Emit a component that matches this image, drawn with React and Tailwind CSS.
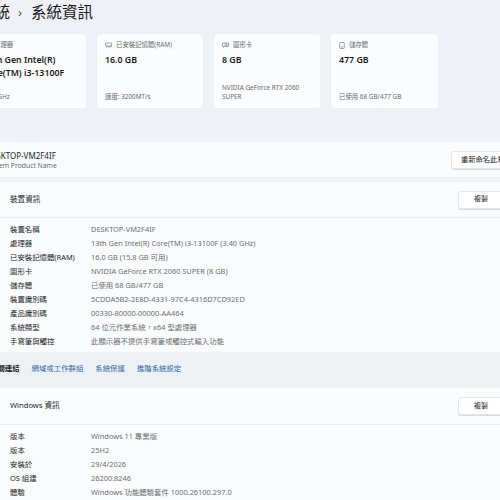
import React from "react";

const FONT = "font-['Noto_Sans','Noto_Sans_CJK_TC',sans-serif]";

function ChipIcon() {
  return (
    <svg width="7" height="6" viewBox="0 0 14 12" fill="none" stroke="#7a7a7a" strokeWidth="1.4">
      <rect x="1" y="2" width="12" height="6" rx="0.5" />
      <path d="M3 8v3M6 8v3M9 8v3M12 8v3" />
    </svg>
  );
}

function GpuIcon() {
  return (
    <svg width="7" height="6" viewBox="0 0 14 12" fill="none" stroke="#7a7a7a" strokeWidth="1.4">
      <rect x="1" y="2" width="12" height="7" rx="0.5" />
      <circle cx="8" cy="5.5" r="2" />
      <path d="M3 9v2" />
    </svg>
  );
}

function DriveIcon() {
  return (
    <svg width="6" height="7" viewBox="0 0 12 14" fill="none" stroke="#7a7a7a" strokeWidth="1.4">
      <rect x="1.5" y="1" width="9" height="12" rx="1" />
      <path d="M4 10h4" />
    </svg>
  );
}

function CpuIcon() {
  return (
    <svg width="7" height="7" viewBox="0 0 14 14" fill="none" stroke="#7a7a7a" strokeWidth="1.4">
      <rect x="3" y="3" width="8" height="8" />
      <path d="M5 1v2M9 1v2M5 11v2M9 11v2M1 5h2M1 9h2M11 5h2M11 9h2" />
    </svg>
  );
}

function Chevron() {
  return (
    <svg width="8" height="8" viewBox="0 0 16 16" fill="none" stroke="#555" strokeWidth="1.4">
      <path d="M4 10l4-4 4 4" />
    </svg>
  );
}

const cards = [
  { icon: <CpuIcon />, label: "處理器", value: ["13th Gen Intel(R)", "Core(TM) i3-13100F"], sub: ["3.40 GHz"], w: "w-[113px]" },
  { icon: <ChipIcon />, label: "已安裝記憶體(RAM)", value: ["16.0 GB"], sub: ["速度: 3200MT/s"], w: "w-[108px]" },
  { icon: <GpuIcon />, label: "圖形卡", value: ["8 GB"], sub: ["NVIDIA GeForce RTX 2060", "SUPER"], w: "w-[108px]" },
  { icon: <DriveIcon />, label: "儲存體", value: ["477 GB"], sub: ["已使用 68 GB/477 GB"], w: "w-[109px]" },
];

const deviceRows = [
  ["裝置名稱", "DESKTOP-VM2F4IF"],
  ["處理器", "13th Gen Intel(R) Core(TM) i3-13100F (3.40 GHz)"],
  ["已安裝記憶體(RAM)", "16.0 GB (15.8 GB 可用)"],
  ["圖形卡", "NVIDIA GeForce RTX 2060 SUPER (8 GB)"],
  ["儲存體", "已使用 68 GB/477 GB"],
  ["裝置識別碼", "5CDDA5B2-2E8D-4331-97C4-4316D7CD92ED"],
  ["產品識別碼", "00330-80000-00000-AA464"],
  ["系統類型", "64 位元作業系統，x64 型處理器"],
  ["手寫筆與觸控", "此顯示器不提供手寫筆或觸控式輸入功能"],
];

const windowsRows = [
  ["版本", "Windows 11 專業版"],
  ["版本", "25H2"],
  ["安裝於", "29/4/2026"],
  ["OS 組建", "26200.8246"],
  ["體驗", "Windows 功能體驗套件 1000.26100.297.0"],
];

function InfoRow({ label, value }) {
  return (
    <div className="flex h-[14px] items-center">
      <div className="w-[81px] shrink-0 text-[7.4px] text-[#262626] whitespace-nowrap">{label}</div>
      <div className="text-[7.4px] text-[#6e6e6e] whitespace-nowrap">{value}</div>
    </div>
  );
}

function SectionHeader({ title, icon, height }) {
  return (
    <div className={`flex items-center ${height} border-b border-[#e9ecf0] pl-[9px] pr-[8px]`}>
      <div className="w-[22px] shrink-0 flex items-center">{icon}</div>
      <div className="text-[7.6px] text-[#1f1f1f] whitespace-nowrap">{title}</div>
      <div className="ml-auto flex items-center gap-[10px]">
        <button className="w-[46px] h-[18px] rounded-[3px] bg-white border border-[#e3e5e9] shadow-[0_1px_0_#d9dbe0] text-[7px] text-[#222]">
          複製
        </button>
        <div className="w-[8px]">
          <Chevron />
        </div>
      </div>
    </div>
  );
}

export default function App() {
  return (
    <div className={`w-[500px] h-[500px] overflow-hidden bg-[#eff1f7] ${FONT}`}>
      <div className="ml-[-21px] w-[551px]">
        {/* Breadcrumb title */}
        <div className="flex items-center h-[20px] mt-[3px] gap-[8px] text-[15.5px] text-[#1a1a1a] whitespace-nowrap">
          <span>系統</span>
          <span className="text-[13px] text-[#555]">›</span>
          <span className="ml-[1px]">系統資訊</span>
        </div>

        {/* Spec cards */}
        <div className="mt-[10px] ml-[-5px] flex gap-[9px]">
          {cards.map((c) => (
            <div
              key={c.label}
              className={`${c.w} h-[76px] shrink-0 rounded-[4px] bg-[#fbfcfe] border border-[#eceef2] flex flex-col px-[8px] pt-[7px] pb-[7px]`}
            >
              <div className="flex items-center gap-[4px] h-[8px] text-[6.4px] text-[#6a6a6a] whitespace-nowrap">
                {c.icon}
                <span>{c.label}</span>
              </div>
              <div className="mt-[5px] text-[8.8px] leading-[13px] font-semibold text-[#1a1a1a] whitespace-nowrap">
                {c.value.map((v) => (
                  <div key={v}>{v}</div>
                ))}
              </div>
              <div className="mt-auto text-[6.4px] leading-[9px] text-[#6a6a6a] whitespace-nowrap">
                {c.sub.map((s) => (
                  <div key={s}>{s}</div>
                ))}
              </div>
            </div>
          ))}
        </div>

        {/* Device name */}
        <div className="mt-[33px] h-[35px] bg-[#f9fbfd] rounded-[4px] flex items-center pl-[7px] pr-[8px]">
          <div className="flex flex-col pt-[2px]">
            <div className="text-[8px] leading-[10px] text-[#1f1f1f]">DESKTOP-VM2F4IF</div>
            <div className="text-[6.8px] leading-[9px] text-[#6a6a6a]">System Product Name</div>
          </div>
          <button className="ml-auto h-[18px] px-[9px] rounded-[3px] bg-white border border-[#e3e5e9] shadow-[0_1px_0_#d9dbe0] text-[7.3px] text-[#222] whitespace-nowrap">
            重新命名此電腦
          </button>
        </div>

        {/* Device specifications */}
        <div className="mt-[5px] bg-[#f9fbfd] rounded-[4px]">
          <SectionHeader title="裝置資訊" icon={<CpuIcon />} height="h-[36px]" />
          <div className="pl-[31px] pt-[5px] pb-[3px]">
            {deviceRows.map(([l, v]) => (
              <InfoRow key={l} label={l} value={v} />
            ))}
          </div>
          <div className="h-[34px] bg-[#eef1f4] flex items-center pl-[11px] gap-[12px] text-[7.4px] whitespace-nowrap">
            <span className="font-semibold text-[#1f1f1f]">相關連結</span>
            <span className="text-[#2f66a8]">網域或工作群組</span>
            <span className="text-[#2f66a8]">系統保護</span>
            <span className="text-[#2f66a8]">進階系統設定</span>
          </div>
        </div>

        {/* Windows specifications */}
        <div className="mt-[2px] bg-[#f9fbfd] rounded-[4px]">
          <SectionHeader title="Windows 資訊" icon={<ChipIcon />} height="h-[37px]" />
          <div className="pl-[31px] pt-[5px] pb-[6px]">
            {windowsRows.map(([l, v], i) => (
              <InfoRow key={i} label={l} value={v} />
            ))}
          </div>
        </div>
      </div>
    </div>
  );
}
